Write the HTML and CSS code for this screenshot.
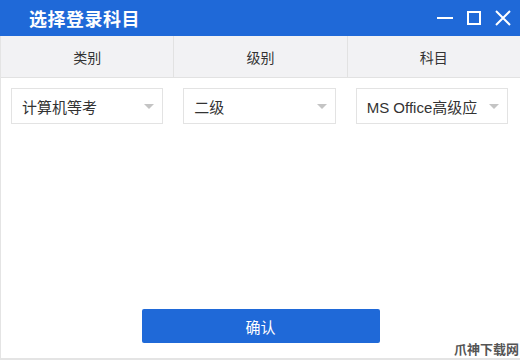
FILE: index.html
```html
<!DOCTYPE html>
<html lang="zh-CN">
<head>
    <meta charset="UTF-8">
    <title>选择登录科目</title>
    <link rel="stylesheet" href="styles.css">
</head>
<body>
    <div class="window">
        <div class="title-bar">
            <h1 class="title">选择登录科目</h1>
            <div class="controls">
                <svg class="ctrl" width="18" height="18" viewBox="0 0 18 18"><path d="M1 9h16" stroke="#fff" stroke-width="2"/></svg>
                <svg class="ctrl" width="18" height="18" viewBox="0 0 18 18"><rect x="3" y="3" width="12" height="12" fill="none" stroke="#fff" stroke-width="2"/></svg>
                <svg class="ctrl" width="18" height="18" viewBox="0 0 18 18"><path d="M2 2l14 14M16 2L2 16" stroke="#fff" stroke-width="2"/></svg>
            </div>
        </div>
        <div class="head-row">
            <div class="head-cell">类别</div>
            <div class="head-cell">级别</div>
            <div class="head-cell">科目</div>
        </div>
        <div class="select-row">
            <div class="select-cell">
                <div class="select"><span>计算机等考</span><i class="arrow"></i></div>
            </div>
            <div class="select-cell">
                <div class="select"><span>二级</span><i class="arrow"></i></div>
            </div>
            <div class="select-cell">
                <div class="select"><span>MS Office高级应</span><i class="arrow"></i></div>
            </div>
        </div>
        <div class="footer">
            <button class="ok-btn">确认</button>
        </div>
        <div class="watermark">爪神下载网</div>
    </div>
</body>
</html>
```

FILE: styles.css
```css
* {
    margin: 0;
    padding: 0;
    box-sizing: border-box;
}
body {
    width: 520px;
    height: 360px;
    font-family: "Liberation Sans", Arial, "Noto Sans CJK SC", sans-serif;
    background: #fff;
    overflow: hidden;
}
.window {
    position: relative;
    width: 520px;
    height: 360px;
    display: flex;
    flex-direction: column;
    border-left: 1px solid #e4e4e4;
    border-bottom: 2px solid #e4e4e4;
}
.title-bar {
    height: 36px;
    background: #1f69d8;
    display: flex;
    align-items: center;
    justify-content: space-between;
    padding: 0 8px 0 29px;
    margin-left: -1px;
}
.title {
    color: #fff;
    font-size: 18px;
    font-weight: bold;
    letter-spacing: 0.5px;
}
.controls {
    display: flex;
    gap: 11px;
    align-items: center;
}
.head-row {
    height: 42px;
    display: flex;
    background: #f2f2f4;
    border-bottom: 1px solid #e2e2e2;
}
.head-cell {
    flex: 1;
    display: flex;
    align-items: center;
    justify-content: center;
    font-size: 14px;
    color: #333;
    border-right: 1px solid #e2e2e2;
}
.head-cell:last-child {
    border-right: none;
}
.select-row {
    display: flex;
    padding-top: 10px;
    padding-right: 2px;
}
.select-cell {
    flex: 1;
    padding-left: 10px;
    padding-right: 10px;
}
.select {
    height: 36px;
    border: 1px solid #e3e3e3;
    display: flex;
    align-items: center;
    justify-content: space-between;
    padding: 0 8px 0 10px;
    font-size: 15px;
    color: #333;
}
.arrow {
    width: 0;
    height: 0;
    border-left: 5px solid transparent;
    border-right: 5px solid transparent;
    border-top: 5px solid #c4c4c4;
}
.footer {
    flex: 1;
    display: flex;
    justify-content: center;
    align-items: flex-end;
    padding-bottom: 15px;
}
.ok-btn {
    width: 238px;
    height: 34px;
    background: #1f69d8;
    color: #fff;
    border: none;
    border-radius: 2px;
    font-size: 15px;
    font-family: inherit;
}
.watermark {
    position: absolute;
    right: 1px;
    bottom: 0px;
    font-size: 13px;
    font-weight: bold;
    color: #555;
}
```
